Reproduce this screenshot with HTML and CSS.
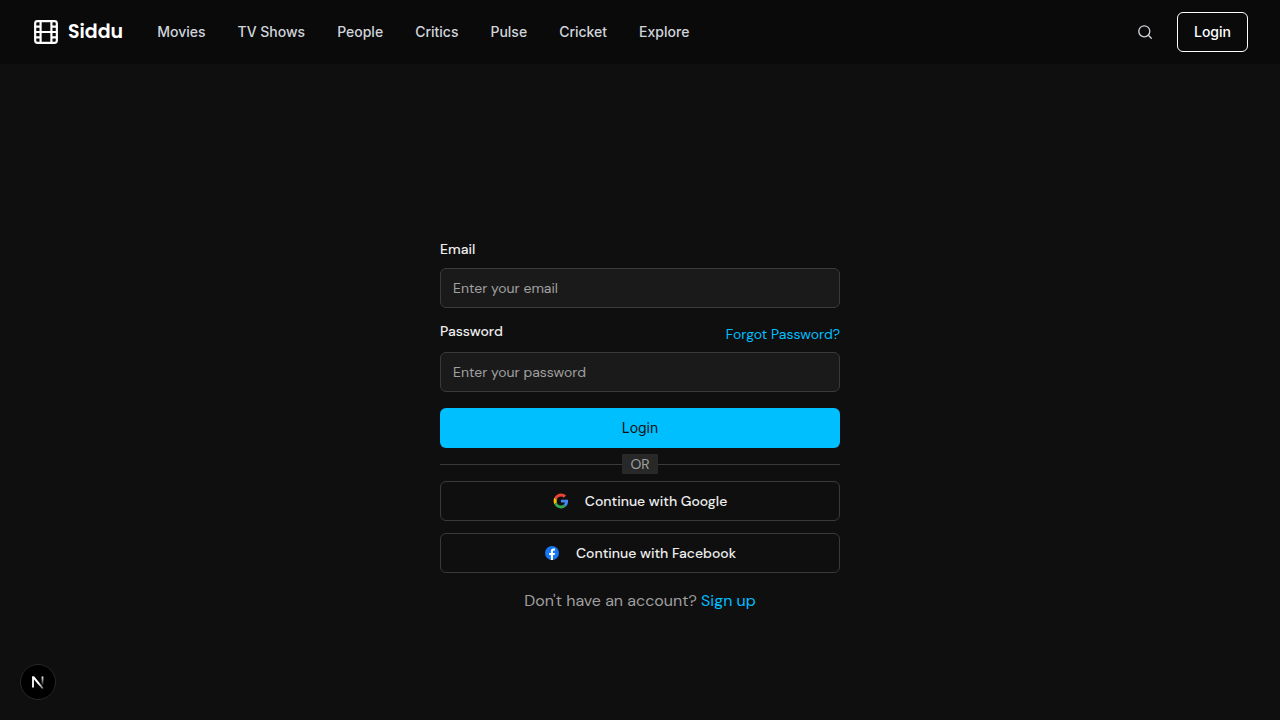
FILE: index.html
```html
<!DOCTYPE html>
<html lang="en">
<head>
<meta charset="utf-8">
<meta name="viewport" content="width=device-width, initial-scale=1">
<title>Login - Siddu</title>
<link rel="stylesheet" href="styles.css">
</head>
<body>
<header class="header">
  <a class="brand" href="#">
    <svg class="brand-icon" viewBox="0 0 24 24" fill="none" stroke="currentColor" stroke-width="2" stroke-linecap="round" stroke-linejoin="round" aria-hidden="true"><rect x="2" y="2" width="20" height="20" rx="2.2"/><path d="M7 2v20M17 2v20M2 12h20M2 7h5M2 17h5M17 17h5M17 7h5"/></svg>
    <span class="brand-name">Siddu</span>
  </a>
  <nav class="nav">
    <a href="#">Movies</a>
    <a href="#">TV Shows</a>
    <a href="#">People</a>
    <a href="#">Critics</a>
    <a href="#">Pulse</a>
    <a href="#">Cricket</a>
    <a href="#">Explore</a>
  </nav>
  <div class="actions">
    <button class="search" type="button" aria-label="Search">
      <svg viewBox="0 0 16 16" width="16" height="16" fill="none" stroke="currentColor" stroke-width="1.3" stroke-linecap="round" aria-hidden="true"><circle cx="7.300" cy="7.300" r="5.500"/><path d="M11.300 11.300l3 3"/></svg>
    </button>
    <button class="header-login" type="button">Login</button>
  </div>
</header>
<main class="main">
  <form class="form">
    <label class="label" for="email">Email</label>
    <input class="input" id="email" type="email" placeholder="Enter your email">
    <div class="password-row">
      <label class="label" for="password">Password</label>
      <a class="link" href="#">Forgot Password?</a>
    </div>
    <input class="input" id="password" type="password" placeholder="Enter your password">
    <button class="submit" type="submit">Login</button>
    <div class="divider"><span>OR</span></div>
    <div class="providers">
      <button class="provider" type="button">
        <svg width="16" height="16" viewBox="-2 -2 52 52" aria-hidden="true"><path fill="#ea4335" d="M24 9.500c3.540 0 6.710 1.220 9.210 3.600l6.850-6.850C35.900 2.380 30.470 0 24 0 14.620 0 6.510 5.380 2.560 13.220l7.980 6.190C12.430 13.720 17.740 9.500 24 9.500z"/><path fill="#4285f4" d="M46.980 24.550c0-1.570-.15-3.090-.38-4.550H24v9.020h12.940c-.58 2.960-2.260 5.480-4.780 7.180l7.730 6c4.510-4.180 7.090-10.360 7.090-17.650z"/><path fill="#fbbc05" d="M10.530 28.590c-.48-1.450-.76-2.990-.76-4.590s.27-3.140.76-4.590l-7.980-6.190C.92 16.460 0 20.120 0 24s.92 7.540 2.560 10.780l7.970-6.190z"/><path fill="#34a853" d="M24 48c6.480 0 11.930-2.130 15.890-5.810l-7.730-6c-2.150 1.450-4.920 2.300-8.160 2.300-6.260 0-11.570-4.220-13.470-9.910l-7.980 6.190C6.510 42.620 14.620 48 24 48z"/></svg>
        Continue with Google
      </button>
      <button class="provider" type="button">
        <svg width="16" height="16" viewBox="0 0 24 24" aria-hidden="true"><circle cx="12" cy="12" r="10.500" fill="#1877f2"/><path fill="#fff" d="M10.300 22.400V15H7.700v-3.100h2.600V9.600c0-2.700 1.600-4.200 4-4.200 1.100 0 2.200.2 2.200.2v2.600h-1.300c-1.300 0-1.700.8-1.700 1.600v2.100h2.900l-.5 3.100h-2.400v7.400a10.500 10.500 0 0 1-3.200 0z"/></svg>
        Continue with Facebook
      </button>
    </div>
    <p class="signup">Don't have an account? <a class="link" href="#">Sign up</a></p>
  </form>
</main>
<button class="dev-badge" type="button" aria-label="Open developer tools">
  <svg width="16" height="16" viewBox="0 0 16 16" fill="none" aria-hidden="true">
    <defs><linearGradient id="fade" x1="0" y1="2" x2="0" y2="12" gradientUnits="userSpaceOnUse"><stop stop-color="#fff"/><stop offset="1" stop-color="#fff" stop-opacity="0"/></linearGradient><linearGradient id="tail" x1="9" y1="9" x2="14" y2="15" gradientUnits="userSpaceOnUse"><stop stop-color="#fff"/><stop offset="1" stop-color="#fff" stop-opacity=".3"/></linearGradient></defs>
    <path d="M3 13.500V2.500" stroke="#fff" stroke-width="1.800"/><path d="M2.100 2.500h2.200l9.300 11.500-1.500 1.100L2.500 3.800z" fill="url(#tail)"/><path d="M12.500 2.500V11" stroke="url(#fade)" stroke-width="1.800"/>
  </svg>
</button>
</body>
</html>
```
FILE: styles.css
```css
* { box-sizing: border-box; }
body {
  margin: 0;
  min-height: 100vh;
  background: #0f0f0f;
  color: #ededed;
  font-family: "DM Sans", Inter, sans-serif;
  font-size: 14px;
  line-height: 20px;
}
a { color: inherit; text-decoration: none; }
button, input { font: inherit; color: inherit; }
button { cursor: pointer; }
.header {
  display: flex;
  align-items: center;
  height: 64px;
  padding: 0 32px;
  background: #0a0a0a;
  font-family: Inter, sans-serif;
}
.brand { display: flex; align-items: center; gap: 8px; color: #fff; }
.brand-icon { width: 28px; height: 28px; padding: 1px; }
.brand-name {
  font-family: Poppins, Inter, sans-serif;
  font-size: 19px;
  line-height: 28px;
  font-weight: 600;
}
.nav { display: flex; gap: 32px; margin-left: 34px; color: #d1d5db; font-weight: 500; }
.actions { display: flex; align-items: center; gap: 16px; margin-left: auto; }
.search {
  display: flex;
  align-items: center;
  justify-content: center;
  width: 32px;
  height: 32px;
  padding: 0;
  border: 0;
  background: none;
  color: #d1d5db;
}
.header-login {
  height: 40px;
  padding: 0 16px;
  border: 1px solid #fff;
  border-radius: 6px;
  background: none;
  color: #fff;
  font-weight: 500;
}
.main { display: flex; justify-content: center; padding: 178px 16px 32px; }
.form { display: flex; flex-direction: column; width: 100%; max-width: 400px; }
.label { font-weight: 500; line-height: 14px; }
.input {
  width: 100%;
  height: 40px;
  padding: 0 12px;
  border: 1px solid #3a3a3a;
  border-radius: 6px;
  background: #1a1a1a;
}
.label + .input { margin-top: 12px; }
.input::placeholder { color: #a0a0a0; opacity: 1; }
.password-row { display: flex; justify-content: space-between; align-items: flex-start; margin: 16px 0 8px; }
.link { color: #00bfff; }
.submit {
  height: 40px;
  margin-top: 16px;
  border: 0;
  border-radius: 6px;
  background: #00bfff;
  color: #0f0f0f;
  font-family: Inter, sans-serif;
}
.divider { display: flex; align-items: center; margin: 6px 0 7px; color: #a0a0a0; }
.divider::before, .divider::after { content: ""; flex: 1; height: 1px; background: #3a3a3a; }
.divider span { padding: 0 8px; background: #282828; }
.providers { display: grid; gap: 12px; }
.provider {
  display: flex;
  align-items: center;
  justify-content: center;
  gap: 16px;
  height: 40px;
  border: 1px solid #3a3a3a;
  border-radius: 6px;
  background: none;
  font-weight: 500;
}
.signup { margin: 16px 0 0; text-align: center; color: #a0a0a0; font-size: 16px; line-height: 24px; }
.dev-badge {
  position: fixed;
  left: 20px;
  bottom: 20px;
  display: flex;
  align-items: center;
  justify-content: center;
  width: 36px;
  height: 36px;
  padding: 0;
  border: 1px solid #282828;
  border-radius: 50%;
  background: #000;
}
```
